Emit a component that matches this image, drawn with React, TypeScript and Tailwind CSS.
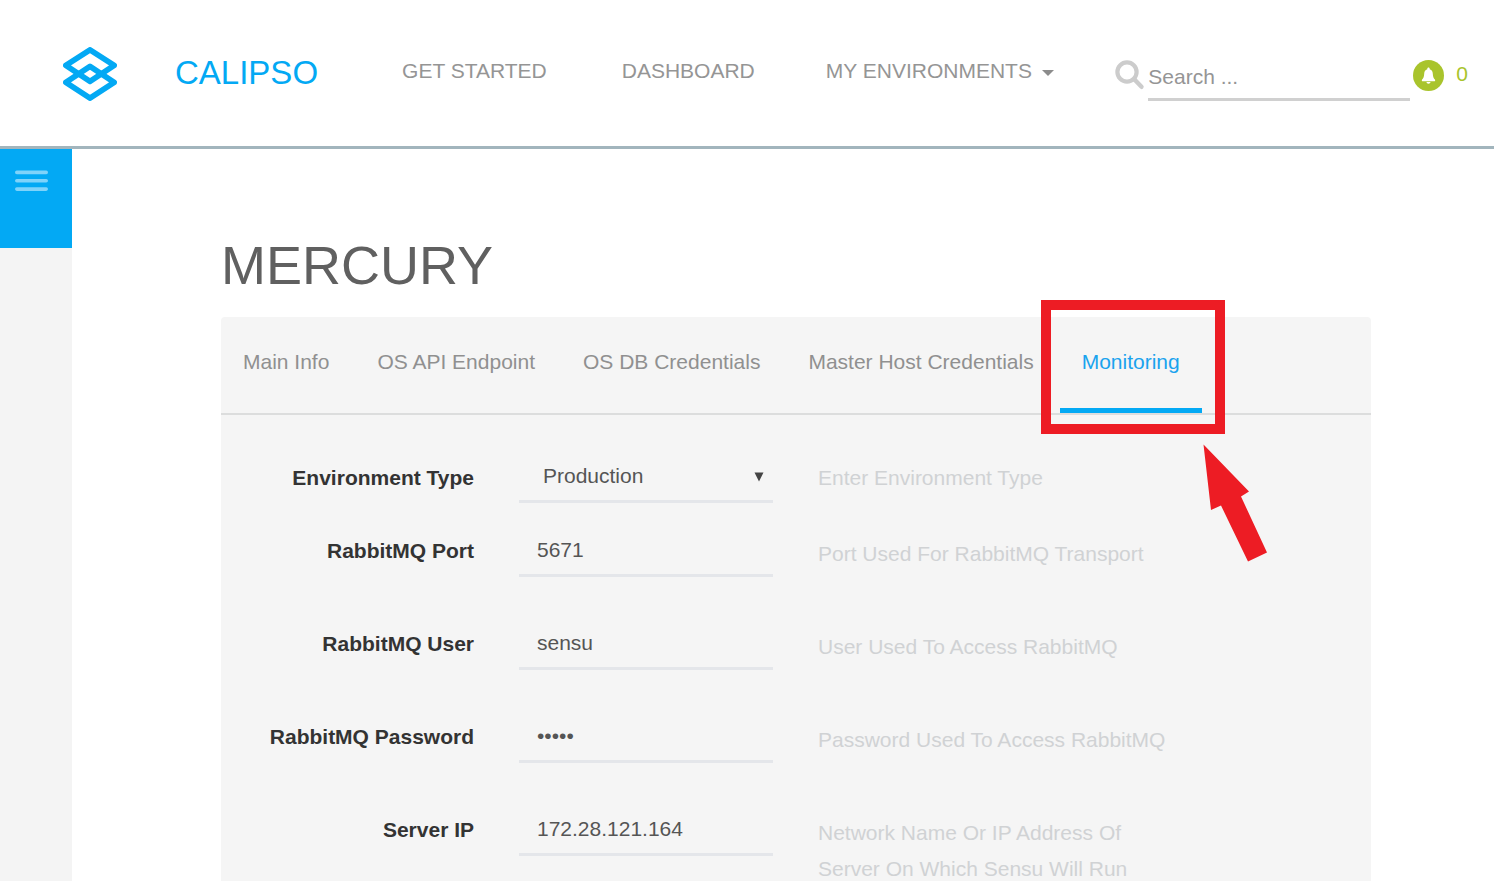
import { useState } from "react";

type Field = {
  id: string;
  label: string;
  value: string;
  hint: string;
  type: "text" | "password" | "select";
};

const tabs = [
  "Main Info",
  "OS API Endpoint",
  "OS DB Credentials",
  "Master Host Credentials",
  "Monitoring",
];

const fields: Field[] = [
  { id: "env-type", label: "Environment Type", value: "Production", hint: "Enter Environment Type", type: "select" },
  { id: "rabbit-port", label: "RabbitMQ Port", value: "5671", hint: "Port Used For RabbitMQ Transport", type: "text" },
  { id: "rabbit-user", label: "RabbitMQ User", value: "sensu", hint: "User Used To Access RabbitMQ", type: "text" },
  { id: "rabbit-password", label: "RabbitMQ Password", value: "sensu", hint: "Password Used To Access RabbitMQ", type: "password" },
  { id: "server-ip", label: "Server IP", value: "172.28.121.164", hint: "Network Name Or IP Address Of Server On Which Sensu Will Run", type: "text" },
];

function Logo() {
  return (
    <svg viewBox="0 0 54 54" className="mt-[2px] h-[54px] w-[54px] shrink-0" fill="none" stroke="#03a9f4" strokeWidth="5.6" strokeLinejoin="round" aria-hidden="true">
      <path d="M27 2.8 L51.2 18.4 L27 34.4 L2.8 18.4 Z" />
      <path d="M27 19.4 L51.2 35.4 L27 51.2 L2.8 35.4 Z" />
    </svg>
  );
}

function Header() {
  return (
    <header className="flex h-[149px] items-center border-b-3 border-[#a2b5bd] bg-white pl-[63px] pr-[25px] text-[21px] text-[#959595]">
      <Logo />
      <a href="#home" className="ml-[58px] text-[33px] leading-10 text-[#03a9f4]">CALIPSO</a>
      <nav className="ml-[84px] flex items-center gap-[75px] whitespace-nowrap pb-1">
        <a href="#start">GET STARTED</a>
        <a href="#dashboard">DASHBOARD</a>
        <button type="button" className="-ml-1 flex items-center gap-[10px]">
          MY ENVIRONMENTS
          <svg viewBox="0 0 12 6" className="mt-1 h-[6px] w-3" fill="#8c8c8c" aria-hidden="true">
            <path d="M0 0H12L6 6Z" />
          </svg>
        </button>
      </nav>
      <div className="ml-auto flex items-center">
        <svg viewBox="0 0 30 30" className="mt-1 h-[30px] w-[30px]" fill="none" stroke="#cccccc" aria-hidden="true">
          <circle cx="12" cy="12" r="9.6" strokeWidth="4.2" />
          <path d="M19 19 L26.5 26.8" strokeWidth="4.4" strokeLinecap="round" />
        </svg>
        <input
          type="search"
          aria-label="Search"
          placeholder="Search ..."
          className="ml-[3px] h-14 w-[262px] border-b-3 border-[#d0d0d0] bg-transparent pt-[10px] outline-none placeholder:text-[#959595]"
        />
        <button type="button" aria-label="Notifications" className="ml-[3px] flex items-center gap-3 pr-px pt-[2px] text-[#a9c42c]">
          <svg viewBox="0 0 31 31" className="mt-[2px] h-[31px] w-[31px]" aria-hidden="true">
            <circle cx="15.5" cy="15.5" r="15.5" fill="#a9c42c" />
            <path
              fill="#fff"
              d="M15.5 7.500c.8 0 1.200.6 1.200 1.300v.4c2.300.6 3 2.300 3.100 4.500.2 3.200.7 4.500 2.100 5.900.4.400.4 1.400-.1 1.700H9.200c-.5-.3-.5-1.300-.1-1.700 1.400-1.400 1.900-2.700 2.100-5.900.1-2.200.8-3.900 3.100-4.500v-.4c0-.7.4-1.300 1.200-1.300Zm-2 14.500h4c-.1 1-.9 1.700-2 1.700s-1.900-.7-2-1.700Z"
            />
          </svg>
          <span>0</span>
        </button>
      </div>
    </header>
  );
}

function Callout() {
  return (
    <span className="pointer-events-none absolute -left-[19px] -top-[17px] z-10" aria-hidden="true">
      <span className="block h-[134px] w-[184px] border-10 border-[#ed1c24]" />
      <svg viewBox="0 0 66 120" className="absolute left-[162px] top-[144px] h-[120px] w-[66px]" fill="#ed1c24">
        <path d="M0.500 0.500L46 47.500L38 52.500L64 108.500L45 117.500L18 61.500L8 66Z" />
      </svg>
    </span>
  );
}

function FieldRow({ field }: { field: Field }) {
  const [value, setValue] = useState(field.value);
  const isSelect = field.type === "select";
  return (
    <div className={`grid grid-cols-[253px_254px_minmax(0,354px)] gap-x-[45px] ${isSelect ? "min-h-[74px]" : "min-h-[93px]"}`}>
      <label htmlFor={field.id} className={`text-right font-bold leading-9 text-[#333333] ${isSelect ? "pt-[10px]" : "pt-[9px]"}`}>
        {field.label}
      </label>
      {isSelect ? (
        <div className="relative h-[53px]">
          <select
            id={field.id}
            value={value}
            onChange={(e) => setValue(e.target.value)}
            className="h-full w-full appearance-none border-b-3 border-[#e4e6ea] bg-transparent pl-6 pt-[2px] text-[#555555] outline-none"
          >
            <option>Production</option>
            <option>Development</option>
            <option>Testing</option>
          </select>
          <svg viewBox="0 0 10 10" className="pointer-events-none absolute right-[9px] top-[22px] h-[10px] w-[10px]" fill="#444444" aria-hidden="true">
            <path d="M0.500 0.500H9.500L5 9.500Z" />
          </svg>
        </div>
      ) : (
        <input
          id={field.id}
          type={field.type}
          value={value}
          onChange={(e) => setValue(e.target.value)}
          className="h-[53px] w-full border-b-3 border-[#e4e6ea] bg-transparent px-[18px] pt-[2px] text-[#555555] outline-none"
        />
      )}
      <p className={`leading-9 text-[#d0d2d4] ${isSelect ? "pt-[10px]" : "pt-3"}`}>{field.hint}</p>
    </div>
  );
}

export default function App() {
  const [active, setActive] = useState("Monitoring");
  return (
    <div className="flex min-h-screen flex-col bg-white font-['Liberation_Sans',Arial,sans-serif]">
      <Header />
      <div className="flex flex-1">
        <aside className="w-[72px] shrink-0 bg-[#f4f4f4]">
          <button type="button" aria-label="Toggle menu" className="flex h-[99px] w-full items-start bg-[#03a9f4] pl-[15px] pt-[21px]">
            <svg viewBox="0 0 33 22" className="h-[22px] w-[33px]" stroke="#7fd3fa" strokeWidth="3.6" strokeLinecap="round" aria-hidden="true">
              <path d="M1.800 2.400H31.200M1.800 10.700H31.200M1.800 19.100H31.200" />
            </svg>
          </button>
        </aside>
        <main className="min-w-0 flex-1 pl-[149px] pr-[123px] pt-[84px]">
          <h1 className="text-[54px] leading-16 text-[#606060]">MERCURY</h1>
          <section className="mt-5 rounded-t-sm bg-[#f5f5f5] text-[21px]">
            <div role="tablist" className="flex h-[98px] gap-1 whitespace-nowrap border-b-2 border-[#dcdddd]">
              {tabs.map((tab) => (
                <div key={tab} className="relative flex">
                  <button
                    type="button"
                    role="tab"
                    aria-selected={tab === active}
                    onClick={() => setActive(tab)}
                    className={`border-b-5 px-[22px] pb-[2px] ${tab === active ? "border-[#03a9f4] text-[#1aa3ee]" : "border-transparent text-[#909090]"}`}
                  >
                    {tab}
                  </button>
                  {tab === "Monitoring" && <Callout />}
                </div>
              ))}
            </div>
            <form className="pt-[35px]">
              {fields.map((field) => (
                <FieldRow key={field.id} field={field} />
              ))}
            </form>
          </section>
        </main>
      </div>
    </div>
  );
}
